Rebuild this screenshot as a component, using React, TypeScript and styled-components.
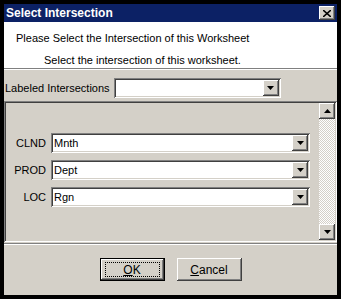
import styled, { createGlobalStyle, css } from "styled-components";

const GlobalStyle = createGlobalStyle`
  html, body {
    margin: 0;
    padding: 0;
    background: #000;
  }
  body {
    font-family: "Liberation Sans", Arial, sans-serif;
    font-size: 11px;
    color: #000;
  }
`;

const raised = css`
  background: #d4d0c8;
  box-shadow: inset -1px -1px 0 #404040, inset 1px 1px 0 #ffffff,
    inset -2px -2px 0 #808080, inset 2px 2px 0 #d4d0c8;
`;

const sunken = css`
  box-shadow: inset 1px 1px 0 #808080, inset -1px -1px 0 #ffffff,
    inset 2px 2px 0 #404040, inset -2px -2px 0 #d4d0c8;
`;

type ComboProps = { width: number };

function DownArrow() {
  return (
    <svg width="7" height="4" viewBox="0 0 7 4">
      <path d="M0 0h7L3.5 4z" fill="#000" />
    </svg>
  );
}

function UpArrow() {
  return (
    <svg width="7" height="4" viewBox="0 0 7 4">
      <path d="M0 4h7L3.5 0z" fill="#000" />
    </svg>
  );
}

function Combo({ value, width }: { value?: string; width: number }) {
  return (
    <ComboBox width={width}>
      <ComboText>{value}</ComboText>
      <ArrowButton>
        <DownArrow />
      </ArrowButton>
    </ComboBox>
  );
}

const rows = [
  { label: "CLND", value: "Mnth" },
  { label: "PROD", value: "Dept" },
  { label: "LOC", value: "Rgn" },
];

export default function App() {
  return (
    <>
      <GlobalStyle />
      <Frame>
        <TitleBar>
          <Title>Select Intersection</Title>
          <CloseButton>
            <svg width="8" height="7" viewBox="0 0 8 7">
              <path d="M0 0l8 7M8 0L0 7" stroke="#000" strokeWidth="1.6" />
            </svg>
          </CloseButton>
        </TitleBar>
        <Header>
          <HeadLine>Please Select the Intersection of this Worksheet</HeadLine>
          <SubLine>Select the intersection of this worksheet.</SubLine>
        </Header>
        <Body>
          <LabeledRow>
            <span>Labeled Intersections</span>
            <Combo width={167} />
          </LabeledRow>
          <Panel>
            <Fields>
              {rows.map((r) => (
                <FieldRow key={r.label}>
                  <FieldLabel>{r.label}</FieldLabel>
                  <Combo value={r.value} width={259} />
                </FieldRow>
              ))}
            </Fields>
            <ScrollBar>
              <ScrollButton>
                <UpArrow />
              </ScrollButton>
              <Track />
              <ScrollButton>
                <DownArrow />
              </ScrollButton>
            </ScrollBar>
          </Panel>
          <Etched />
          <Buttons>
            <Button $default>
              <Focus>
                <u>O</u>K
              </Focus>
            </Button>
            <Button>
              <u>C</u>ancel
            </Button>
          </Buttons>
        </Body>
      </Frame>
    </>
  );
}

const Frame = styled.div`
  width: 341px;
  height: 299px;
  box-sizing: border-box;
  border: 4px solid #000;
  display: flex;
  flex-direction: column;
  background: #d4d0c8;
`;

const TitleBar = styled.div`
  height: 18px;
  background: #0c2165;
  display: flex;
  align-items: center;
  justify-content: space-between;
  padding: 0 2px 0 2px;
`;

const Title = styled.div`
  color: #fff;
  font-weight: bold;
  font-size: 12px;
  font-family: "Liberation Sans", Arial, sans-serif;
`;

const CloseButton = styled.div`
  ${raised};
  width: 16px;
  height: 14px;
  display: flex;
  align-items: center;
  justify-content: center;
`;

const Header = styled.div`
  height: 47px;
  background: #fff;
  border-bottom: 1px solid #808080;
  box-sizing: border-box;
  display: flex;
  flex-direction: column;
  padding-top: 10px;
  gap: 9px;
`;

const HeadLine = styled.div`
  padding-left: 12px;
  line-height: 13px;
`;

const SubLine = styled.div`
  padding-left: 40px;
  line-height: 13px;
`;

const Body = styled.div`
  flex: 1;
  display: flex;
  flex-direction: column;
  border-top: 1px solid #fff;
`;

const LabeledRow = styled.div`
  display: flex;
  align-items: center;
  gap: 4px;
  padding: 8px 0 0 1px;
  height: 20px;
`;

const ComboBox = styled.div<ComboProps>`
  ${sunken};
  background: #fff;
  width: ${(p) => p.width}px;
  height: 20px;
  box-sizing: border-box;
  padding: 2px;
  display: flex;
  align-items: center;
`;

const ComboText = styled.div`
  flex: 1;
  padding-left: 1px;
  font-size: 11px;
`;

const ArrowButton = styled.div`
  ${raised};
  width: 16px;
  height: 16px;
  display: flex;
  align-items: center;
  justify-content: center;
`;

const Panel = styled.div`
  ${sunken};
  margin-top: 3px;
  height: 141px;
  box-sizing: border-box;
  padding: 2px;
  display: flex;
`;

const Fields = styled.div`
  flex: 1;
  display: flex;
  flex-direction: column;
  gap: 7px;
  padding-top: 30px;
`;

const FieldRow = styled.div`
  display: flex;
  align-items: center;
  gap: 5px;
`;

const FieldLabel = styled.div`
  width: 40px;
  text-align: right;
  font-size: 11px;
`;

const ScrollBar = styled.div`
  width: 16px;
  display: flex;
  flex-direction: column;
`;

const ScrollButton = styled.div`
  ${raised};
  height: 16px;
  display: flex;
  align-items: center;
  justify-content: center;
`;

const Track = styled.div`
  flex: 1;
  background: repeating-conic-gradient(#ffffff 0 25%, #d4d0c8 0 50%) 0 0 / 2px
    2px;
`;

const Etched = styled.div`
  height: 0;
  border-top: 1px solid #808080;
  border-bottom: 1px solid #fff;
  margin-top: 1px;
`;

const Buttons = styled.div`
  display: flex;
  justify-content: center;
  gap: 12px;
  padding-top: 13px;
`;

const Button = styled.div<{ $default?: boolean }>`
  ${raised};
  width: 65px;
  height: 23px;
  box-sizing: border-box;
  display: flex;
  align-items: center;
  justify-content: center;
  font-size: 12px;
  ${(p) =>
    p.$default &&
    css`
      box-shadow: inset -1px -1px 0 #000, inset 1px 1px 0 #000,
        inset -2px -2px 0 #404040, inset 2px 2px 0 #fff,
        inset -3px -3px 0 #808080;
    `}
`;

const Focus = styled.div`
  border: 1px dotted #000;
  width: 53px;
  height: 13px;
  display: flex;
  align-items: center;
  justify-content: center;
`;
